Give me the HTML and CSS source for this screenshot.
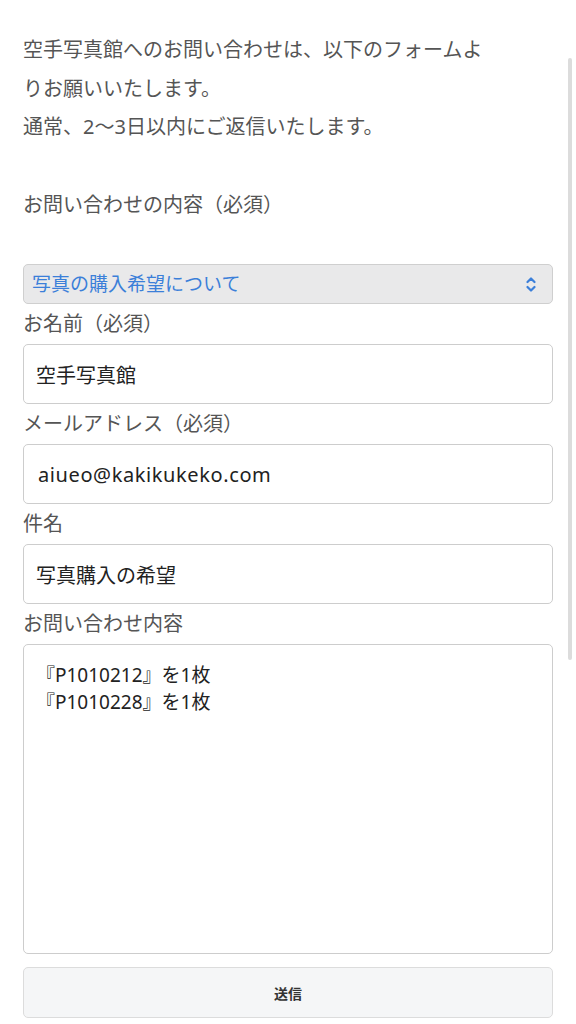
FILE: index.html
```html
<!DOCTYPE html>
<html lang="ja">
<head>
    <meta charset="UTF-8">
    <meta name="viewport" content="width=device-width, initial-scale=1.0">
    <title>お問い合わせ</title>
    <link rel="stylesheet" href="styles.css">
</head>
<body>
    <div class="scrollbar"></div>
    <div class="contact">
        <p class="intro">空手写真館へのお問い合わせは、以下のフォームよりお願いいたします。<br>通常、2〜3日以内にご返信いたします。</p>

        <form class="form">
            <label class="topic-label" for="topic">お問い合わせの内容（必須）</label>
            <div class="select-wrap">
                <select id="topic" class="select">
                    <option>写真の購入希望について</option>
                    <option>撮影のご依頼について</option>
                    <option>その他</option>
                </select>
                <svg class="select-icon" width="10" height="17" viewBox="0 0 10 17">
                    <path d="M1.5 6 L5 2.5 L8.5 6" fill="none" stroke="#3b7fd9" stroke-width="2.2" stroke-linecap="round" stroke-linejoin="round"/>
                    <path d="M1.5 11 L5 14.5 L8.5 11" fill="none" stroke="#3b7fd9" stroke-width="2.2" stroke-linecap="round" stroke-linejoin="round"/>
                </svg>
            </div>

            <label class="label" for="name">お名前（必須）</label>
            <input id="name" class="input" type="text" value="空手写真館">

            <label class="label" for="mail">メールアドレス（必須）</label>
            <input id="mail" class="input input-mail" type="email" value="aiueo@kakikukeko.com">

            <label class="label" for="subject">件名</label>
            <input id="subject" class="input" type="text" value="写真購入の希望">

            <label class="label" for="message">お問い合わせ内容</label>
            <textarea id="message" class="textarea">『P1010212』を1枚
『P1010228』を1枚</textarea>

            <button type="submit" class="submit">送信</button>
        </form>
    </div>
</body>
</html>
```

FILE: styles.css
```css
body {
    margin: 0;
    background: #fff;
    font-family: "Noto Sans", "Noto Sans CJK JP", sans-serif;
    color: #555;
}

.scrollbar {
    position: absolute;
    top: 58px;
    right: 4px;
    width: 4px;
    height: 602px;
    border-radius: 2px;
    background: #dcdcdc;
}

.contact {
    padding: 31px 23px 0;
}

.intro {
    margin: 0;
    max-width: 470px;
    font-size: 20px;
    line-height: 38.5px;
}

.form {
    display: flex;
    flex-direction: column;
}

.topic-label {
    margin: 39px 0 40px;
    font-size: 20px;
    line-height: 38.5px;
}

.select-wrap {
    position: relative;
}

.select {
    display: block;
    width: 100%;
    height: 40px;
    margin: 0;
    padding: 0 30px 0 8px;
    border: 1px solid #cfcfcf;
    border-radius: 5px;
    background: #e9e9ea;
    color: #3b7fd9;
    font-family: inherit;
    font-size: 19px;
    appearance: none;
    -webkit-appearance: none;
}

.select-icon {
    position: absolute;
    top: 12px;
    right: 17px;
}

.label {
    height: 40px;
    font-size: 20px;
    line-height: 40px;
}

.input {
    box-sizing: border-box;
    width: 100%;
    height: 60px;
    margin: 0;
    padding: 0 12px;
    border: 1px solid #cdcdcd;
    border-radius: 5px;
    background: #fff;
    color: #222;
    font-family: inherit;
    font-size: 20px;
}

.input-mail {
    padding-left: 14px;
    letter-spacing: 0.6px;
}

.textarea {
    box-sizing: border-box;
    width: 100%;
    height: 310px;
    margin: 0;
    padding: 17px 12px;
    border: 1px solid #cdcdcd;
    border-radius: 5px;
    background: #fff;
    color: #222;
    font-family: inherit;
    font-size: 19px;
    line-height: 27px;
    resize: none;
}

.submit {
    height: 51px;
    margin-top: 13px;
    border: 1px solid #dcdcdc;
    border-radius: 5px;
    background: #f5f6f7;
    color: #333;
    font-family: inherit;
    font-size: 14px;
    font-weight: bold;
}
```
